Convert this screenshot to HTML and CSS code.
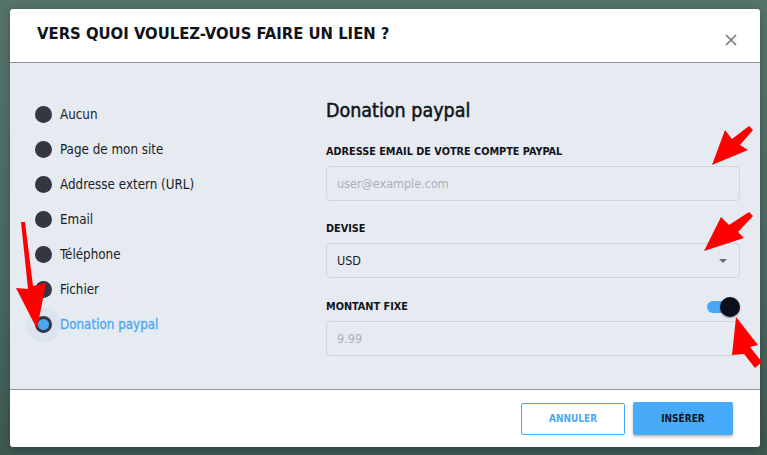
FILE: index.html
```html
<!DOCTYPE html>
<html lang="fr">
<head>
<meta charset="utf-8">
<title>Lien</title>
<link rel="stylesheet" href="styles.css">
</head>
<body>
<div class="modal">
  <header class="modal-head">
    <h1 class="modal-title">VERS QUOI VOULEZ-VOUS FAIRE UN LIEN ?</h1>
    <button class="close" aria-label="Fermer">
      <svg width="12" height="12" viewBox="0 0 12 12"><path d="M1 1L11 11M11 1L1 11" stroke="#777" stroke-width="1.6" fill="none"/></svg>
    </button>
  </header>
  <div class="modal-body">
    <ul class="choices">
      <li class="choice"><span class="radio"></span>Aucun</li>
      <li class="choice"><span class="radio"></span>Page de mon site</li>
      <li class="choice"><span class="radio"></span>Addresse extern (URL)</li>
      <li class="choice"><span class="radio"></span>Email</li>
      <li class="choice"><span class="radio"></span>Téléphone</li>
      <li class="choice"><span class="radio"></span>Fichier</li>
      <li class="choice selected"><span class="radio"></span>Donation paypal</li>
    </ul>
    <div class="form">
      <h2 class="form-title">Donation paypal</h2>
      <div class="field">
        <label class="label">ADRESSE EMAIL DE VOTRE COMPTE PAYPAL</label>
        <div class="input placeholder">user@example.com</div>
      </div>
      <div class="field">
        <label class="label">DEVISE</label>
        <div class="input select">USD<span class="caret"></span></div>
      </div>
      <div class="field">
        <div class="label-row">
          <label class="label">MONTANT FIXE</label>
          <span class="toggle"><span class="knob"></span></span>
        </div>
        <div class="input placeholder">9.99</div>
      </div>
    </div>
  </div>
  <footer class="modal-foot">
    <button class="btn btn-outline">ANNULER</button>
    <button class="btn btn-primary">INSÉRER</button>
  </footer>
</div>
<svg class="arrows" width="767" height="455" viewBox="0 0 767 455">
  <polygon fill="#ff0000" points="21,222 25,222 33,286 46,283 37,329 16,288 28,289"/>
  <polygon fill="#ff0000" points="712,165 725,130 732,139 749,126 753,130 740,145 748,150"/>
  <polygon fill="#ff0000" points="704,251 721,217 729,225 749,212 753,216 738,232 744,238"/>
  <polygon fill="#ff0000" points="736,317 758,345 750,347 762,362 755,368 744,354 732,355"/>
</svg>
</body>
</html>
```
FILE: styles.css
```css
* { box-sizing: border-box; }
html, body { margin: 0; padding: 0; }
body {
  width: 767px;
  height: 455px;
  overflow: hidden;
  background: linear-gradient(180deg, #56736b 0%, #4b6861 60%, #3e5852 100%);
  font-family: "DejaVu Sans Condensed", "DejaVu Sans", sans-serif;
  padding: 9px 0 0 10px;
  position: relative;
}
.modal {
  width: 750px;
  background: #fff;
  border-radius: 3px;
  box-shadow: 0 2px 8px rgba(0,0,0,0.25);
}
.modal-head {
  height: 54px;
  display: flex;
  align-items: center;
  justify-content: space-between;
  padding: 0 22px 0 27px;
  border-bottom: 1px solid #8c919b;
}
.modal-title {
  margin: 0;
  font-size: 16.5px;
  font-weight: bold;
  color: #11131a;
  position: relative;
  top: -2px;
}
.close {
  border: 0;
  background: none;
  padding: 0;
  width: 14px;
  height: 14px;
  display: flex;
  align-items: center;
  justify-content: center;
  position: relative;
  top: 4px;
}
.modal-body {
  background: #e6ebf2;
  height: 327px;
  display: flex;
  border-bottom: 1px solid #8c919b;
}
.choices {
  list-style: none;
  margin: 0;
  padding: 34px 0 0 25px;
  width: 316px;
}
.choice {
  display: flex;
  align-items: center;
  height: 35px;
  font-size: 13.3px;
  color: #1b1d24;
  gap: 8px;
}
.radio {
  width: 17px;
  height: 17px;
  border-radius: 50%;
  background: #343743;
  flex: none;
}
.choice.selected { color: #4ba8f1; -webkit-text-stroke: 0.3px #4ba8f1; }
.choice.selected .radio {
  background: #4aa7f5;
  border: 3px solid #343743;
  box-shadow: 0 0 0 9px rgba(214, 225, 238, 0.7);
}
.form {
  flex: 1;
  padding: 36px 20px 0 0;
}
.form-title {
  margin: 0 0 22px;
  font-size: 19.5px;
  font-weight: normal;
  -webkit-text-stroke: 0.5px #11131a;
  color: #11131a;
  line-height: 24px;
}
.field { margin-bottom: 21px; }
.label {
  display: block;
  font-size: 10.8px;
  font-weight: bold;
  color: #11131a;
  line-height: 14px;
  margin-bottom: 7px;
}
.label-row {
  display: flex;
  justify-content: space-between;
  align-items: center;
  margin: -2px 0 4px;
  height: 20px;
}
.label-row .label { margin-bottom: 0; }
.input {
  height: 35px;
  border: 1px solid #cfd5de;
  border-radius: 4px;
  display: flex;
  align-items: center;
  padding: 0 10px;
  font-size: 12.5px;
  color: #1b1d24;
  background: #e6ebf2;
}
.placeholder { color: #a9afba; }
.select { justify-content: space-between; }
.caret {
  width: 0; height: 0;
  border-left: 4px solid transparent;
  border-right: 4px solid transparent;
  border-top: 4px solid #666a72;
  margin-right: 2px;
}
.toggle {
  position: relative;
  width: 34px;
  height: 20px;
  display: block;
}
.toggle::before {
  content: "";
  position: absolute;
  left: 1px;
  top: 4px;
  width: 28px;
  height: 12px;
  border-radius: 6px;
  background: #4aa7f5;
}
.knob {
  position: absolute;
  right: 0;
  top: 0;
  width: 20px;
  height: 20px;
  border-radius: 50%;
  background: #0b0f1e;
  box-shadow: 0 1px 2px rgba(0,0,0,0.4);
}
.modal-foot {
  height: 57px;
  display: flex;
  justify-content: flex-end;
  align-items: center;
  gap: 8px;
  padding: 0 27px 0 0;
}
.btn {
  font-family: inherit;
  font-size: 10px;
  font-weight: bold;
  height: 32px;
  border-radius: 2px;
  cursor: pointer;
}
.btn-outline {
  width: 104px;
  background: #fff;
  border: 1px solid #4ba8f1;
  color: #4ba8f1;
}
.btn-primary {
  width: 100px;
  height: 33px;
  background: #48abf9;
  border: 0;
  color: #11131a;
  box-shadow: 0 2px 3px rgba(0,0,0,0.25);
}
.arrows {
  position: absolute;
  left: 0;
  top: 0;
  pointer-events: none;
}
```
